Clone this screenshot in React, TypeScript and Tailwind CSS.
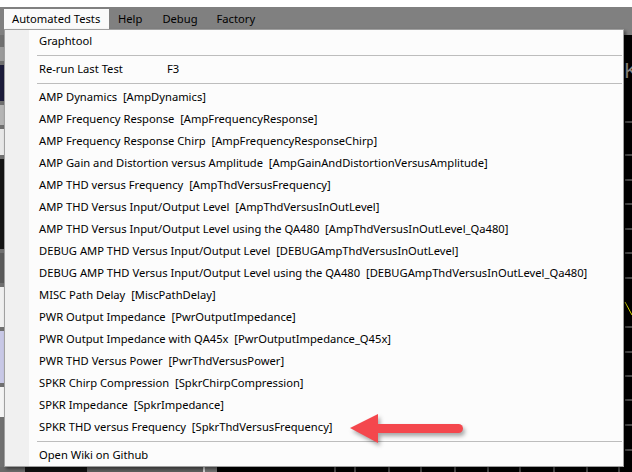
import React from "react";

type Entry = { kind: "item"; label: string; shortcut?: string } | { kind: "sep" };

const entries: Entry[] = [
  { kind: "item", label: "Graphtool" },
  { kind: "sep" },
  { kind: "item", label: "Re-run Last Test", shortcut: "F3" },
  { kind: "sep" },
  { kind: "item", label: "AMP Dynamics  [AmpDynamics]" },
  { kind: "item", label: "AMP Frequency Response  [AmpFrequencyResponse]" },
  { kind: "item", label: "AMP Frequency Response Chirp  [AmpFrequencyResponseChirp]" },
  { kind: "item", label: "AMP Gain and Distortion versus Amplitude  [AmpGainAndDistortionVersusAmplitude]" },
  { kind: "item", label: "AMP THD versus Frequency  [AmpThdVersusFrequency]" },
  { kind: "item", label: "AMP THD Versus Input/Output Level  [AmpThdVersusInOutLevel]" },
  { kind: "item", label: "AMP THD Versus Input/Output Level using the QA480  [AmpThdVersusInOutLevel_Qa480]" },
  { kind: "item", label: "DEBUG AMP THD Versus Input/Output Level  [DEBUGAmpThdVersusInOutLevel]" },
  { kind: "item", label: "DEBUG AMP THD Versus Input/Output Level using the QA480  [DEBUGAmpThdVersusInOutLevel_Qa480]" },
  { kind: "item", label: "MISC Path Delay  [MiscPathDelay]" },
  { kind: "item", label: "PWR Output Impedance  [PwrOutputImpedance]" },
  { kind: "item", label: "PWR Output Impedance with QA45x  [PwrOutputImpedance_Q45x]" },
  { kind: "item", label: "PWR THD Versus Power  [PwrThdVersusPower]" },
  { kind: "item", label: "SPKR Chirp Compression  [SpkrChirpCompression]" },
  { kind: "item", label: "SPKR Impedance  [SpkrImpedance]" },
  { kind: "item", label: "SPKR THD versus Frequency  [SpkrThdVersusFrequency]" },
  { kind: "sep" },
  { kind: "item", label: "Open Wiki on Github" },
];

const font = { fontFamily: '"Noto Sans", "Segoe UI", sans-serif' };

function PlotTicks() {
  const ys = [122, 155, 180, 204, 229, 253, 278, 327, 352, 376, 400, 425, 450];
  const xs = [335, 355, 389, 421, 455, 488, 520, 554, 587, 619];
  return (
    <svg className="absolute inset-0" width="415" height="437" viewBox="217 35 415 437">
      <text x="624" y="78" fill="#8a8a8a" fontSize="22" fontFamily="Liberation Sans, sans-serif">K</text>
      {ys.map((y) => (
        <line key={y} x1="625" y1={y} x2="632" y2={y} stroke="#8c8c8c" strokeWidth="1" />
      ))}
      {xs.map((x) => (
        <line key={x} x1={x} y1="467" x2={x} y2="472" stroke="#8c8c8c" strokeWidth="1" />
      ))}
      <line x1="625" y1="302" x2="632" y2="315" stroke="#d8d800" strokeWidth="1" />
    </svg>
  );
}

export default function App() {
  return (
    <div className="w-[632px] h-[472px] relative overflow-hidden bg-white text-[11.2px] text-black" style={font}>
      <div className="h-[7px] bg-white" />
      <div className="h-[28px] bg-[#808080] flex items-start pt-[2px] pl-[4px]">
        <div className="h-[20px] w-[105px] bg-[#fafafa] pl-[8px] flex items-center">Automated Tests</div>
        <div className="h-[20px] pl-[9px] pr-[10px] flex items-center">Help</div>
        <div className="h-[20px] pl-[10px] pr-[10px] flex items-center">Debug</div>
        <div className="h-[20px] px-[9px] flex items-center">Factory</div>
      </div>
      <div className="h-[437px] flex">
        <div className="w-[217px] bg-[#707070] flex flex-col">
          <div className="w-[4px] flex flex-col gap-[4px] pt-[12px]">
            <div className="h-[14px] bg-[#9a9a9a]" />
            <div className="h-[36px] bg-[#1c1c3a]" />
            <div className="h-[20px] bg-[#b4b4b4]" />
            <div className="h-[26px] bg-[#e8e8e8]" />
            <div className="h-[90px] bg-[#151515]" />
            <div className="h-[30px] bg-[#5a5a5a]" />
            <div className="h-[40px] bg-[#f0f0f0]" />
            <div className="h-[52px] bg-[#c8c8e6]" />
            <div className="h-[30px] bg-[#f4f4f4]" />
          </div>
          <div className="mt-auto h-[5px] flex">
            <div className="w-[25px] bg-[#6a6a6a]" />
            <div className="w-[62px] bg-[#111]" />
            <div className="w-[116px] bg-[#5e5e5e]" />
            <div className="w-[2px] bg-[#cfcfcf]" />
          </div>
        </div>
        <div className="flex-1 bg-black relative">
          <PlotTicks />
        </div>
      </div>

      {/* Dropdown menu */}
      <div className="absolute left-[4px] top-[29px] w-[620px] h-[438px] bg-[#fcfcfc] border border-[#a0a0a0] shadow-[2px_2px_3px_rgba(0,0,0,0.45)] flex">
        <div className="w-[24px] bg-[#f0f0f0]" />
        <div className="flex-1 flex flex-col">
          {entries.map((e, i) =>
            e.kind === "sep" ? (
              <div key={i} className="h-[6px] flex items-center pl-[8px] pr-[1px]">
                <div className="h-px w-full bg-[#bdbdbd]" />
              </div>
            ) : (
              <div key={i} className="h-[22px] flex items-center pl-[10px] whitespace-pre">
                {e.shortcut ? (
                  <>
                    <span className="w-[128px]">{e.label}</span>
                    <span>{e.shortcut}</span>
                  </>
                ) : (
                  e.label
                )}
              </div>
            )
          )}
        </div>
      </div>

      {/* Annotation arrow */}
      <svg
        className="absolute left-[340px] top-[405px]"
        width="135"
        height="50"
        viewBox="340 405 135 50"
        style={{ filter: "drop-shadow(2px 3px 2px rgba(0,0,0,0.35))" }}
      >
        <polygon points="350,428 378,414 378,443" fill="#f4474d" />
        <rect x="372" y="424" width="91" height="9" rx="4.5" fill="#f4474d" />
      </svg>
    </div>
  );
}
